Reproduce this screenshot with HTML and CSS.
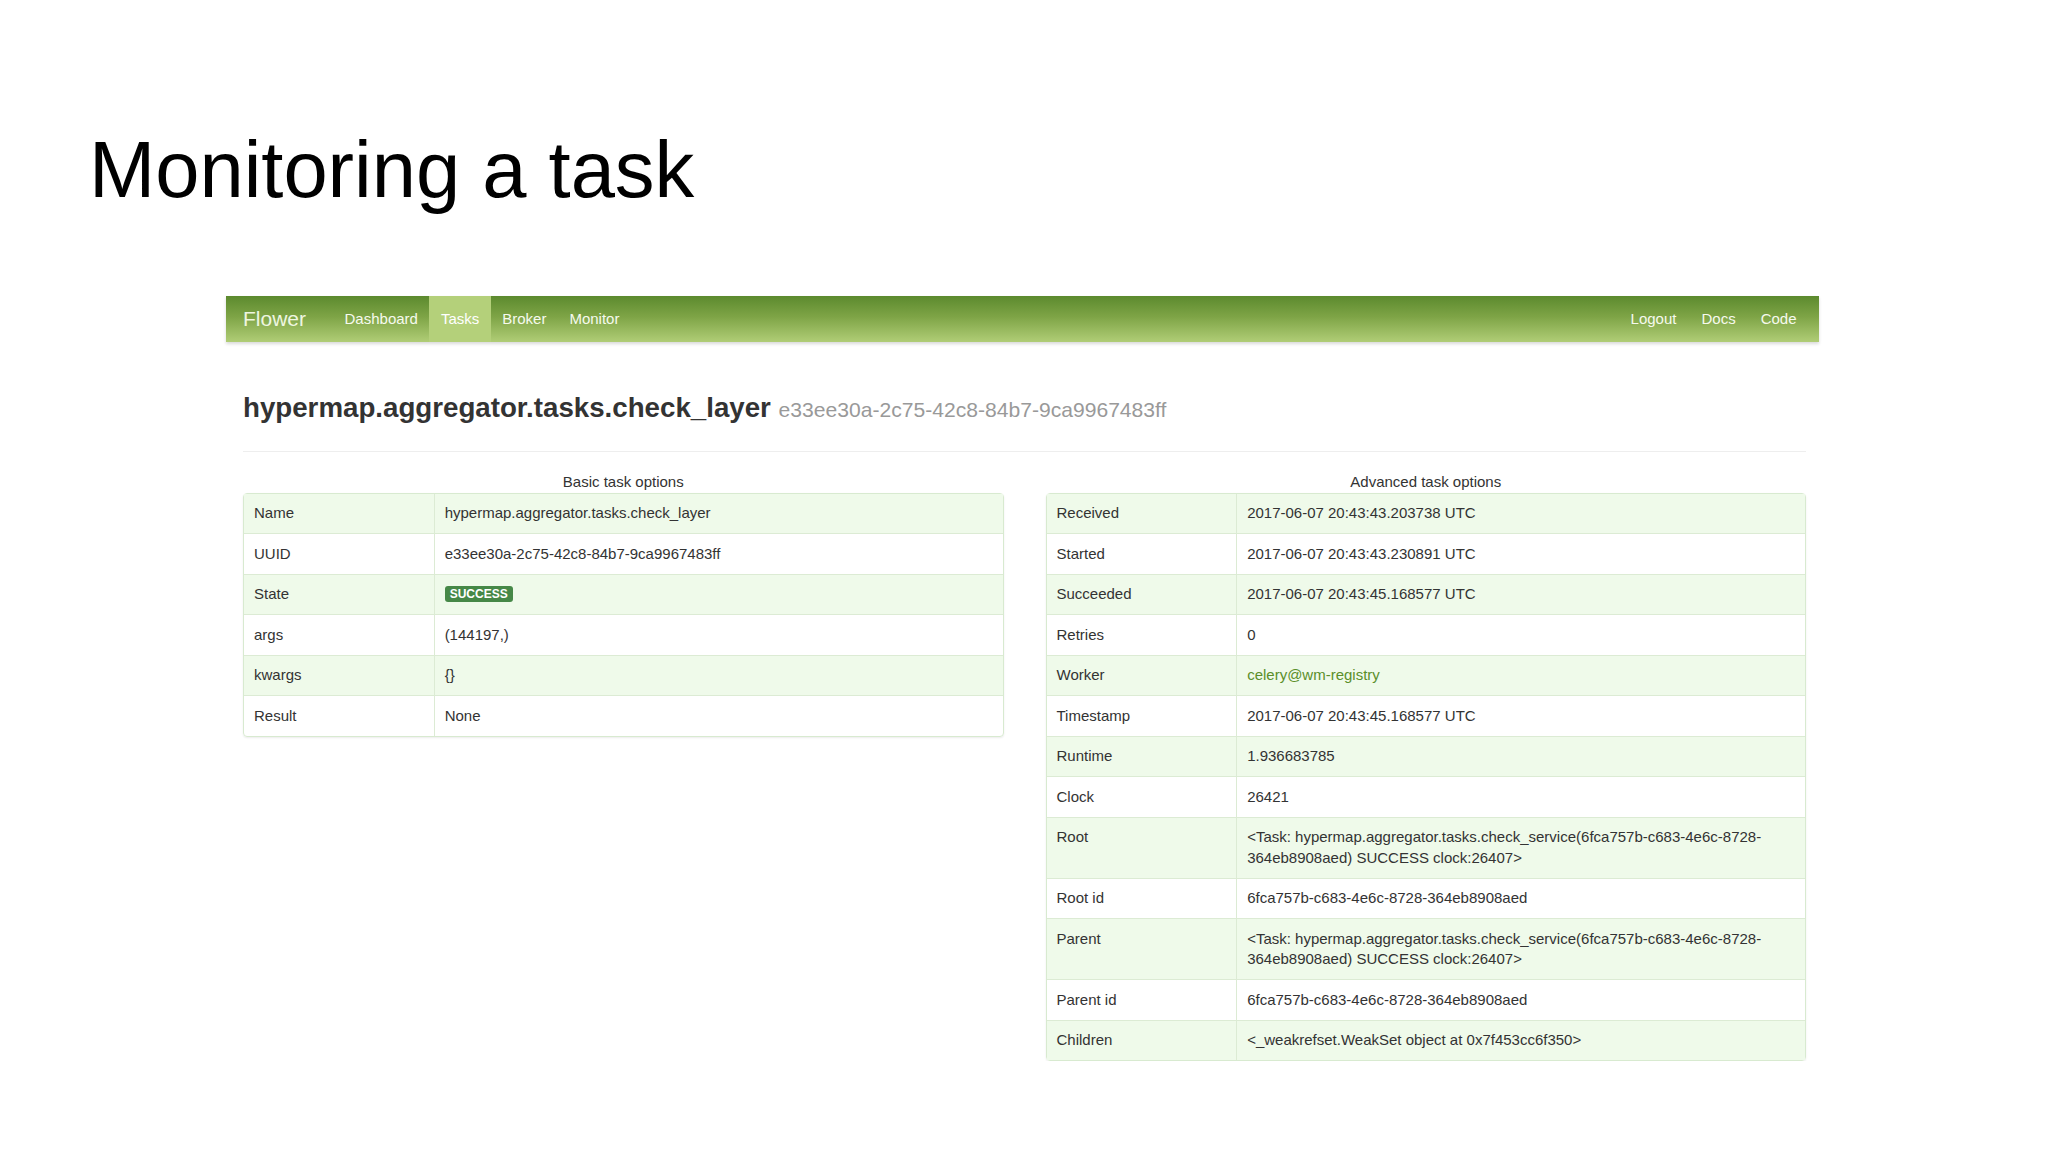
FILE: index.html
```html
<!DOCTYPE html>
<html lang="en">

<head>
    <meta charset="UTF-8">
    <meta name="viewport" content="width=device-width, initial-scale=1.0">
    <title>Monitoring a task</title>
    <link rel="stylesheet" href="styles.css">
</head>

<body>
    <h1 class="slide-title">Monitoring a task</h1>

    <div class="flower">
        <div class="navbar">
            <a class="brand" href="#">Flower</a>
            <ul class="nav">
                <li><a href="#">Dashboard</a></li>
                <li class="active"><a href="#">Tasks</a></li>
                <li><a href="#">Broker</a></li>
                <li><a href="#">Monitor</a></li>
            </ul>
            <ul class="nav nav-right">
                <li><a href="#">Logout</a></li>
                <li><a href="#">Docs</a></li>
                <li><a href="#">Code</a></li>
            </ul>
        </div>

        <div class="content">
            <div class="page-header">
                <h2>hypermap.aggregator.tasks.check_layer <small>e33ee30a-2c75-42c8-84b7-9ca9967483ff</small></h2>
            </div>

            <div class="row">
                <div class="span6">
                    <table class="table">
                        <caption>Basic task options</caption>
                        <tbody>
                            <tr><td>Name</td><td>hypermap.aggregator.tasks.check_layer</td></tr>
                            <tr><td>UUID</td><td>e33ee30a-2c75-42c8-84b7-9ca9967483ff</td></tr>
                            <tr><td>State</td><td><span class="label-success">SUCCESS</span></td></tr>
                            <tr><td>args</td><td>(144197,)</td></tr>
                            <tr><td>kwargs</td><td>{}</td></tr>
                            <tr><td>Result</td><td>None</td></tr>
                        </tbody>
                    </table>
                </div>

                <div class="span6">
                    <table class="table">
                        <caption>Advanced task options</caption>
                        <tbody>
                            <tr><td>Received</td><td>2017-06-07 20:43:43.203738 UTC</td></tr>
                            <tr><td>Started</td><td>2017-06-07 20:43:43.230891 UTC</td></tr>
                            <tr><td>Succeeded</td><td>2017-06-07 20:43:45.168577 UTC</td></tr>
                            <tr><td>Retries</td><td>0</td></tr>
                            <tr><td>Worker</td><td><a href="#">celery@wm-registry</a></td></tr>
                            <tr><td>Timestamp</td><td>2017-06-07 20:43:45.168577 UTC</td></tr>
                            <tr><td>Runtime</td><td>1.936683785</td></tr>
                            <tr><td>Clock</td><td>26421</td></tr>
                            <tr><td>Root</td><td>&lt;Task: hypermap.aggregator.tasks.check_service(6fca757b-c683-4e6c-8728-<br>364eb8908aed) SUCCESS clock:26407&gt;</td></tr>
                            <tr><td>Root id</td><td>6fca757b-c683-4e6c-8728-364eb8908aed</td></tr>
                            <tr><td>Parent</td><td>&lt;Task: hypermap.aggregator.tasks.check_service(6fca757b-c683-4e6c-8728-<br>364eb8908aed) SUCCESS clock:26407&gt;</td></tr>
                            <tr><td>Parent id</td><td>6fca757b-c683-4e6c-8728-364eb8908aed</td></tr>
                            <tr><td>Children</td><td>&lt;_weakrefset.WeakSet object at 0x7f453cc6f350&gt;</td></tr>
                        </tbody>
                    </table>
                </div>
            </div>
        </div>
    </div>
</body>

</html>
```

FILE: styles.css
```css
body {
    margin: 0;
    background-color: #fff;
    font-family: "Liberation Sans", Arial, sans-serif;
}

.slide-title {
    margin: 130px 0 0 89px;
    font-size: 79.5px;
    line-height: 80px;
    font-weight: normal;
    color: #000;
}

.flower {
    width: 1593px;
    margin: 86px 0 0 226px;
    color: #333;
    font-size: 15px;
}

.navbar {
    display: flex;
    align-items: center;
    height: 46px;
    padding-right: 10px;
    background: linear-gradient(to bottom, #5c8a2e 0%, #7ea446 45%, #b0cd76 100%);
    box-shadow: 0 2px 3px rgba(0, 0, 0, 0.15);
}

.brand {
    padding: 0 27px 0 17px;
    font-size: 21px;
    line-height: 46px;
    color: #eef6e0;
    text-decoration: none;
}

.nav {
    display: flex;
    margin: 0;
    padding: 0;
    list-style: none;
}

.nav-right {
    margin-left: auto;
}

.nav li a {
    display: block;
    padding: 0 11.5px;
    line-height: 46px;
    color: #f6faee;
    text-decoration: none;
}

.nav-right li a {
    padding: 0 12.5px;
}

.nav li.active a {
    background-color: #b4d07a;
    color: #fff;
}

.content {
    padding: 0 13px 0 17px;
}

.page-header {
    margin-top: 49px;
    padding-bottom: 24px;
    border-bottom: 1px solid #eeeeee;
}

.page-header h2 {
    margin: 0;
    font-size: 27.7px;
    line-height: 34px;
    font-weight: bold;
    color: #333;
}

.page-header small {
    font-size: 21.1px;
    font-weight: normal;
    color: #999;
}

.row {
    display: grid;
    grid-template-columns: 1fr 1fr;
    gap: 42px;
    margin-top: 20px;
}

.table {
    width: 100%;
    border-collapse: separate;
    border-spacing: 0;
    border: 1px solid #d8ead0;
    border-radius: 4px;
    box-shadow: 0 1px 2px rgba(0, 0, 0, 0.08);
}

.table caption {
    line-height: 20.5px;
    color: #333;
}

.table td {
    padding: 9.5px 10px;
    line-height: 20.5px;
    vertical-align: top;
    text-align: left;
    border-top: 1px solid #dcebd4;
}

.table tr:first-child td {
    border-top: none;
}

.table td:first-child {
    width: 25%;
    box-sizing: border-box;
}

.table td + td {
    border-left: 1px solid #dcebd4;
}

.table tr:nth-child(odd) td {
    background-color: #effaea;
}

.table a {
    color: #5b8f2a;
    text-decoration: none;
}

.label-success {
    display: inline-block;
    padding: 1px 5px;
    font-size: 12px;
    line-height: 14px;
    font-weight: bold;
    color: #fff;
    background-color: #468847;
    border-radius: 3px;
    vertical-align: 1px;
}
```
